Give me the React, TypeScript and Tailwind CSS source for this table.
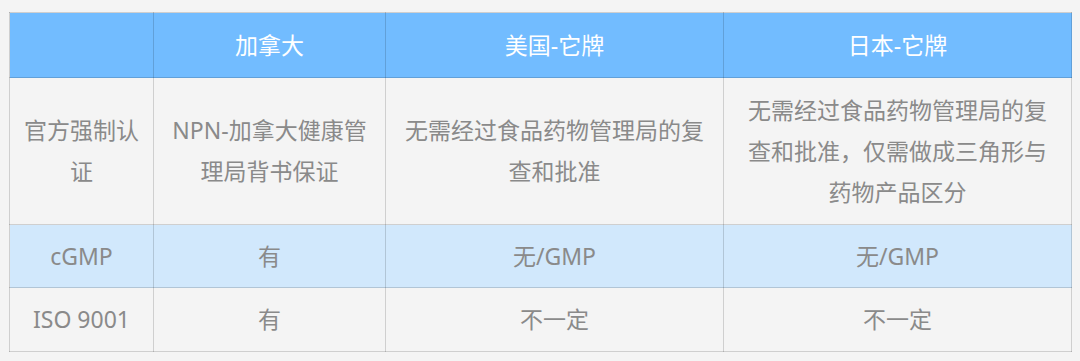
import React from "react";

type Row = {
  label: string;
  cells: string[];
  height: string;
  highlight?: boolean;
};

const headers = ["", "加拿大", "美国-它牌", "日本-它牌"];

const rows: Row[] = [
  {
    label: "官方强制认证",
    cells: [
      "NPN-加拿大健康管理局背书保证",
      "无需经过食品药物管理局的复查和批准",
      "无需经过食品药物管理局的复查和批准，仅需做成三角形与药物产品区分",
    ],
    height: "h-[147px]",
  },
  { label: "cGMP", cells: ["有", "无/GMP", "无/GMP"], height: "h-[63px]", highlight: true },
  { label: "ISO 9001", cells: ["有", "不一定", "不一定"], height: "h-[64px]" },
];

const App = () => {
  return (
    <div
      className="w-[1080px] h-[361px] bg-[#f4f4f4] pt-[12px] pl-[9px]"
      style={{ fontFamily: '"Noto Sans", "Noto Sans CJK SC", sans-serif' }}
    >
      <table className="table-fixed border-collapse w-[1062px] text-[23px] leading-[41px] text-center">
        <colgroup>
          <col className="w-[144px]" />
          <col className="w-[232px]" />
          <col className="w-[338px]" />
          <col className="w-[348px]" />
        </colgroup>
        <thead>
          <tr className="bg-[#72bcff]">
            {headers.map((h, i) => (
              <th
                key={i}
                className="h-[65px] px-[14px] font-normal text-white border border-black/15"
              >
                {h}
              </th>
            ))}
          </tr>
        </thead>
        <tbody>
          {rows.map((row) => (
            <tr key={row.label} className={row.highlight ? "bg-[#d1e8fc]" : ""}>
              {/* Row label */}
              <td className={`${row.height} px-[14px] text-[#8a8a8a] border border-black/15`}>
                {row.label}
              </td>
              {row.cells.map((c, i) => (
                <td
                  key={i}
                  className={`${row.height} px-[14px] text-[#8a8a8a] border border-black/15`}
                >
                  {c}
                </td>
              ))}
            </tr>
          ))}
        </tbody>
      </table>
    </div>
  );
};

export default App;
